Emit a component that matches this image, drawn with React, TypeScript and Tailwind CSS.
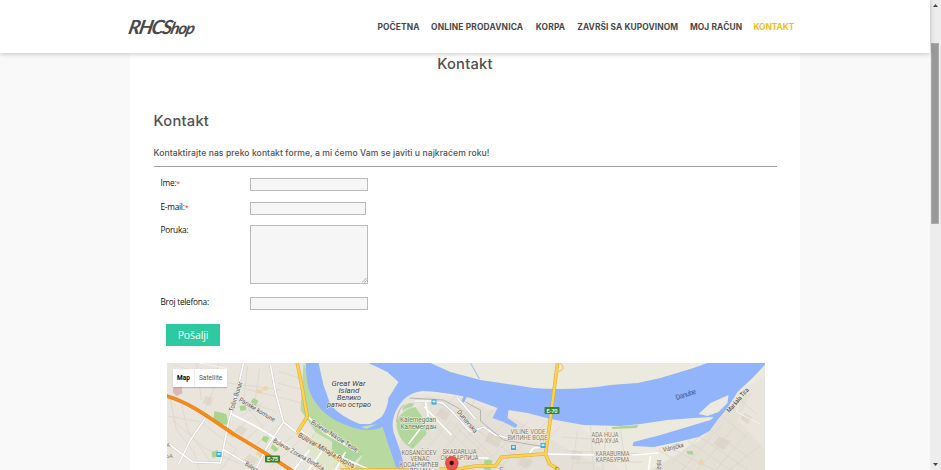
import React from "react";

const nav = [
  { label: "POČETNA", width: "w-[42px]", spacing: "tracking-[0.09px]" },
  { label: "ONLINE PRODAVNICA", width: "w-[93px]", spacing: "tracking-[0.17px]" },
  { label: "KORPA", width: "w-[30px]", spacing: "tracking-[0.2px]" },
  { label: "ZAVRŠI SA KUPOVINOM", width: "w-[101px]", spacing: "tracking-[0.08px]" },
  { label: "MOJ RAČUN", width: "w-[52px]", spacing: "tracking-[0.12px]" },
  { label: "KONTAKT", width: "w-[41px]", spacing: "tracking-[-0.08px]", active: true },
];

type LabelProps = {
  x: number;
  y: number;
  w: number;
  children: string;
  rotate?: number;
  size?: number;
  fill?: string;
  weight?: number;
  italic?: boolean;
};

function Label({ x, y, w, children, rotate = 0, size = 7, fill = "#555", weight = 400, italic = false }: LabelProps) {
  return (
    <text
      transform={`translate(${x} ${y}) rotate(${rotate})`}
      textLength={w}
      lengthAdjust="spacingAndGlyphs"
      fontSize={size}
      fill={fill}
      fontWeight={weight}
      fontStyle={italic ? "italic" : "normal"}
      stroke="#f2efe6"
      strokeWidth="1.2"
      strokeLinejoin="round"
      paintOrder="stroke"
    >
      {children}
    </text>
  );
}

function Transit({ x, y }: { x: number; y: number }) {
  return (
    <g transform={`translate(${x} ${y})`}>
      <rect width="5" height="5" rx="0.6" fill="#2aa5ea" />
      <path d="M1.2 1.2h2.6v1.5H1.2zM1.3 3.7h.7M3 3.7h.7" fill="#e8f6ff" stroke="#e8f6ff" strokeWidth=".4" />
    </g>
  );
}

function Shield({ x, y, label }: { x: number; y: number; label: string }) {
  return (
    <g transform={`translate(${x} ${y})`}>
      <rect width="15" height="7" rx="0.7" fill="#39832d" />
      <text x="2" y="5.6" fontSize="5.7" fontWeight="700" fill="#e8f3e2" textLength="11">{label}</text>
    </g>
  );
}

function CityMap() {
  return (
    <svg viewBox="166.5 363 598.5 107" className="block h-[107px] w-[598.5px] font-['Roboto','Noto_Sans',sans-serif]">
      <rect x="166" y="362" width="600" height="109" fill="#e9e5dc" />
      <path d="M368 362H765V375L735 395L720 421L700 440L765 470H620L580 425L530 413L465 397L400 392Z" fill="#ece9df" />
      <path d="M390 470L400 440L425 396L500 411L605 470Z" fill="#e4e0d7" />
      <path d="M700 440L735 400L752 392L737 420L765 450V470H650Z" fill="#e4e0d6" />

      <g stroke="#d9d5cc" strokeWidth=".8" fill="none">
        <path d="M167 416L200 422L236 449L220 470M170 400L176 430L193 451L199 470M181 404L187 430L211 463M174 365L228 383L280 390M218 363L213 390L203 413M196 363L201 400M247 366L243 402L263 428M259 369L254 404M238 387L274 396L305 404M277 371L302 379M277 383L303 390M242 400L276 412M240 416L262 403M231 435L251 417M240 444L264 424M249 450L279 425M257 465L292 436M270 467L300 440M172 420L204 448L240 464" />
        <path d="M402 437L435 470M409 449L432 424L470 462M417 460L450 421L489 459M428 470L462 427L506 470M430 412L488 470M433 400L527 465M437 415L457 394M451 432L475 400M461 443L492 411M472 454L509 419M486 462L528 421M497 470L548 420M520 470L560 426" />
        <path d="M658 450L692 470M672 449L714 470M687 441L730 470M698 436L748 470M707 428L750 459M723 417L747 438M731 407L748 423M739 399L756 414M670 465L699 436M682 470L721 425M697 470L734 427M715 470L747 433M729 470L760 445M561 437L618 441M565 451L650 454M573 463L642 462M577 431L571 470M590 427L593 470M606 428L602 470M620 430L626 470" />
      </g>
      <g fill="#d5cec0" opacity=".5">
        <path d="M176 374l10 3-3 8-11-3zM205 396l8 2-3 8-8-3zM239 425l8 4-5 7-8-5zM248 454l10 5-6 8-9-6zM406 404l9 5-5 7-8-4zM440 408l10 5-5 8-10-6zM464 411l8 6-6 7-8-5zM488 433l14 6-5 9-13-7zM522 456l11 5-7 8-9-5zM572 450l10 2-3 9-9-3zM718 437l12 4-7 9-10-6zM744 413l8 4-5 7-7-5z" />
      </g>
      <path d="M164 362L195 362L229 369M690 386L728 403M747 371L736 412L760 424" fill="none" stroke="#f3f1ea" strokeWidth="1" />

      <path d="M303 363L315 389L326 411L345 424L382 427L398 470H330L308 442L315 432L300 410Z" fill="#b8d9a0" />
      <path d="M315 432L337 445L362 455L353 470H325L305 450Z" fill="#dfe6cc" />
      <path d="M332 440L363 453L352 464L331 453Z" fill="#add49a" />
      <path d="M214 411L226 414L228 425L219 424L213 418ZM239 406L245 405L246 410L240 411ZM253 398L258 401L255 406L250 402ZM263 436L269 437L266 443L261 440ZM272 444L278 449L275 452L270 448ZM211 452L217 450L219 456L212 458ZM484 460L492 460L490 470L483 469ZM611 427L638 425L636 428L612 429ZM686 451L692 451L693 455L687 454Z" fill="#a9d58e" />
      <path d="M228 428l8 5-3 5-8-4zM259 448l7 5-4 6-7-5zM697 462l5-3 1 5-5 1zM256 389l6 1-1 4-5-1zM264 386l4 1-2 4-4-1z" fill="#ecd5a8" />
      <path d="M173 388l8-1 1 6-6 3-4-4z" fill="#dcb8b4" />

      <path
        d="M305 363C306 374 306 382 309 391C314 405 327 418 341 423C354 429 369 433 382 427L387 442L397 471H405L400 452L393 432Q390 420 397 408Q405 393 422 391Q445 392 470 398L497 408L492 418L503 422L515 428L517 425L507 418L508 410L527 413L550 419L583 425L620 426L640 424L667 420L693 418L713 417L710 420L690 426L660 435L633 442L632 446L653 447L677 442L698 437L709 431L717 420L727 408L737 392L753 377L766 363H707L693 368L660 378L637 383L610 385Q574 391 533 388L507 384L480 380L450 372L430 363Z"
        fill="#91b4fb"
      />
      <path d="M318 363L323 385L330 405Q341 417 359 424L370 424L381 417Q387 409 388 398L398 382L387 372L368 363Z" fill="#ebe8df" />
      <path d="M698 414L710 403L728 395L727 403L718 412L707 416Z" fill="#ece9df" />
      <path d="M470 363L479 379" stroke="#a8c6fa" strokeWidth="1.2" />
      <path d="M360 427L377 424L366 429Z" fill="#c5ddb0" />
      <path d="M462 402L465 396" stroke="#91b4fb" strokeWidth="3" />
      <path d="M415 407Q397 412 396 424Q396 435 405 444L412 449L426 434L425 422Z" fill="#b1d79b" />
      <path d="M402 408Q409 401 414 404L411 407Q403 408 402 411" fill="#b1d79b" />

      <g fill="none" stroke="#cbc8c0" strokeWidth="2.5" strokeLinejoin="round">
        <path d="M270 365L275 392L283 422L297 433M283 422L266 448L255 470M243 363L238 385L228 422L223 448L220 463L192 462L167 443M205 418L190 440L178 464M222 449L257 470" />
        <path d="M414 401L431 401L442 403L451 411L470 432L483 427L495 435L508 438M457 398L475 419" />
      </g>
      <g fill="none" stroke="#fff" strokeWidth="1.6" strokeLinejoin="round">
        <path d="M270 365L275 392L283 422L297 433M283 422L266 448L255 470M243 363L238 385L228 422L223 448L220 463L192 462L167 443M205 418L190 440L178 464M222 449L257 470M231 414L251 424L270 435L312 463M308 417L323 432L357 452M300 431L327 451L370 470M309 450L293 470M324 448L308 470M345 452L335 470" />
        <path d="M408 444L428 418L425 402M412 449L428 464M414 401L431 401L442 403L451 411L470 432L483 427L495 435L508 438M457 398L475 419M424 407L451 435M460 458L488 458M545 454L593 455M632 455L658 453M650 456L648 470M529 453L533 448L543 447" />
      </g>
      <path d="M404 405Q398 407 396 422M465 402L480 410L480 421L503 440L545 447M409 398L443 400L463 411" fill="none" stroke="#aaa9a7" strokeWidth=".8" />

      <g fill="none" strokeLinejoin="round">
        <path d="M296.7 363L301.7 388L306.7 416.7L296.7 432.7M297 432L320 447L351 468M340 470H410M439 469H460M453 470L475 466L495 466L501 457L544 454M557 363L550 418L545 454L549 464L559 470" stroke="#dfac35" strokeWidth="3.5" />
        <path d="M296.7 363L301.7 388L306.7 416.7L296.7 432.7M297 432L320 447L351 468M340 470H410M439 469H460M453 470L475 466L495 466L501 457L544 454M557 363L550 418L545 454L549 464L559 470" stroke="#fcd34f" strokeWidth="2.3" />
        <path d="M166 396C190 403 208 417 233 434L263 452L292 471" stroke="#d9822c" strokeWidth="3.6" />
        <path d="M166 396C190 403 208 417 233 434L263 452L292 471" stroke="#f68b15" strokeWidth="2.8" />
        <path d="M559 363Q565 367 561 370L556 373" stroke="#f4cc79" strokeWidth="1.5" />
      </g>

      <Label x={331} y={385.5} w={34} size={7.4} italic fill="#404040">Great War</Label>
      <Label x={338} y={393} w={21} size={7.4} italic fill="#404040">Island</Label>
      <Label x={336.5} y={400.2} w={24} size={7.4} italic fill="#404040">Велико</Label>
      <Label x={326.5} y={407.4} w={44} size={7.2} italic fill="#404040">ратно острво</Label>
      <Label x={399.5} y={422} w={36} size={7} fill="#53804d">Kalemegdan</Label>
      <Label x={400} y={429} w={36} size={7} fill="#53804d">Калемегдан</Label>
      <Label x={401} y={455} w={35} size={6.6} fill="#777064">KOSANČIĆEV</Label>
      <Label x={410} y={461} w={19} size={6.6} fill="#777064">VENAC</Label>
      <Label x={399} y={467} w={39} size={6.6} fill="#777064">КОСАНЧИЋЕВ</Label>
      <Label x={409} y={473} w={21} size={6.6} fill="#777064">ВЕНАЦ</Label>
      <Label x={442} y={454} w={34} size={6.6} fill="#777064">SKADARLIJA</Label>
      <Label x={440} y={460} w={38} size={6.6} fill="#777064">СКАДАРЛИЈА</Label>
      <Label x={510} y={434} w={35} size={6.6} fill="#8b7b67">VILINE VODE</Label>
      <Label x={507} y={440} w={40} size={6.6} fill="#8b7b67">ВИЛИНЕ ВОДЕ</Label>
      <Label x={591} y={437} w={27} size={6.6} fill="#8b7b67">ADA HUJA</Label>
      <Label x={591} y={443} w={27} size={6.6} fill="#8b7b67">АДА ХУЈА</Label>
      <Label x={595} y={456} w={34} size={6.6} fill="#8b7b67">KARABURMA</Label>
      <Label x={595} y={462} w={34} size={6.6} fill="#8b7b67">КАРАБУРМА</Label>
      <Label x={232.5} y={412} w={31} rotate={-72} size={6.6}>Tošin Bunar</Label>
      <Label x={238} y={401} w={41} rotate={31} size={6.6}>Pariske komune</Label>
      <Label x={272} y={442} w={58} rotate={30} size={6.6}>Bulevar Zorana Đinđića</Label>
      <Label x={310} y={423.5} w={54} rotate={32} size={6.6}>Bulevar Nikole Tesle</Label>
      <Label x={297} y={436.5} w={64} rotate={30} size={7} fill="#6e481b">Bulevar Mihajla Pupina</Label>
      <Label x={244} y={465} w={33} rotate={32} size={6.6}>Bulevar Arsenija</Label>
      <Label x={456} y={412} w={28} rotate={50} size={6.6}>Dunavska</Label>
      <Label x={729} y={413} w={30} rotate={-49} size={6.6} fill="#333">Maršala Tita</Label>
      <Label x={663} y={452} w={21} rotate={-14} size={6.6}>Višnjička</Label>
      <Label x={660} y={475} w={15} rotate={-90} size={6.3}>Mirijevska</Label>
      <text transform="translate(676 400) rotate(-18)" textLength="21" fontSize="7.2" fill="#435c96">Danube</text>
      <text x="162" y="447" fontSize="6" fill="#8b7b67">RA</text>
      <text x="162" y="458" fontSize="6" fill="#8b7b67">ЊА</text>
      <text x="499" y="471" fontSize="6" fill="#555">C</text>
      <text transform="translate(556 472) rotate(-32)" fontSize="6" fill="#555">C</text>
      <Transit x={216} y={452} />
      <Transit x={431} y={399.5} />
      <Transit x={510.5} y={445} />
      <Transit x={540} y={443} />
      <Shield x={264.5} y={455.5} label="E-75" />
      <Shield x={544} y={407} label="E-70" />
      <path d="M451.2 478C450.5 471 445 468 445 462.8A6.3 6.3 0 0 1 457.6 462.8C457.6 468 452 471 451.2 478Z" fill="#ec5349" stroke="#c33a32" strokeWidth=".7" />
      <circle cx="451.2" cy="463" r="2.2" fill="#3b110e" />
    </svg>
  );
}

function Field({ label, required, children }: { label: string; required?: boolean; children: React.ReactNode }) {
  return (
    <div className="flex items-start">
      <label className="-mt-px w-[89.5px] shrink-0 font-['Open_Sans','Noto_Sans',sans-serif] text-[8.3px] leading-[11px] tracking-[-0.26px] whitespace-nowrap text-[#111]">
        {label}{required && <span className="text-[7px] text-[#f33]">*</span>}
      </label>
      {children}
    </div>
  );
}

export default function App() {
  return (
    <div className="flex h-[470px] w-[941px] overflow-hidden bg-[#f9f9f9] font-['Inter','Open_Sans',sans-serif] text-[#505050]">
      <div className="flex h-[470px] w-[930px] shrink-0 flex-col">
        <header className="z-10 flex h-[53px] shrink-0 items-center bg-white pl-[128.5px] shadow-[0_1px_5px_rgba(0,0,0,0.22)]">
          <div className="h-[28px] w-[249px] shrink-0 whitespace-nowrap">
            <div className="inline-flex origin-left -skew-x-12 items-baseline font-['Lato',cursive] leading-[27px] font-bold text-[#4a4a4a] italic">
              <span className="text-[19.5px] tracking-[-1.4px]">RHCS</span>
              <span className="text-[16.5px] tracking-[-1.2px]">hop</span>
            </div>
          </div>
          <nav className="flex gap-[11.6px] pt-px text-[8.4px] leading-[10px] font-bold whitespace-nowrap">
            {nav.map((item) => (
              <a key={item.label} className={`${item.width} ${item.spacing} ${item.active ? "text-[#f2be16]" : "text-[#484848]"}`}>{item.label}</a>
            ))}
          </nav>
        </header>
        <main className="ml-[130px] flex h-[417px] w-[670px] flex-col bg-white">
          <h1 className="mt-[1px] h-[20px] text-center text-[14.7px] leading-[20px] font-medium tracking-[0.25px]">Kontakt</h1>
          <section className="mt-[37px] ml-[23.5px] w-[623px]">
            <h2 className="h-[20px] text-[14.7px] leading-[20px] font-medium tracking-[0.25px]">Kontakt</h2>
            <p className="mt-[17px] h-[11px] text-[8.6px] leading-[11px] font-medium tracking-[0.07px] whitespace-nowrap">Kontaktirajte nas preko kontakt forme, a mi ćemo Vam se javiti u najkraćem roku!</p>
            <div className="mt-[7px] h-px bg-[#a2a2a2]" />
            <form className="pl-[7px]">
              <div className="mt-[11px] h-[23.5px]">
                <Field label="Ime:" required><div className="h-[13px] w-[118px] border border-[#bbb] bg-[#f6f6f6]" /></Field>
              </div>
              <div className="h-[23.5px]">
                <Field label="E-mail:" required><div className="h-[13px] w-[116px] border border-[#bbb] bg-[#f6f6f6]" /></Field>
              </div>
              <div className="h-[72px]">
                <Field label="Poruka:">
                  <div className="flex h-[59px] w-[118px] items-end justify-end border border-[#bbb] bg-[#f6f6f6]">
                    <svg className="h-[6px] w-[6px]" viewBox="0 0 6 6"><path d="M1 5.5L5.5 1M3.5 5.5L5.5 3.5" stroke="#888" strokeWidth=".7" /></svg>
                  </div>
                </Field>
              </div>
              <div className="h-[27px]">
                <Field label="Broj telefona:"><div className="h-[13px] w-[118px] border border-[#bbb] bg-[#f6f6f6]" /></Field>
              </div>
              <button type="button" className="ml-[5.5px] flex h-[22px] w-[54px] items-center justify-center bg-[#2dcaa0] font-['Open_Sans','Noto_Sans',sans-serif] text-[10.5px] leading-[15px] tracking-[-0.1px] text-white">Pošalji</button>
            </form>
          </section>
          <div className="mt-auto ml-[36.5px] grid h-[107px] w-[598.5px] shrink-0">
            <div className="col-start-1 row-start-1"><CityMap /></div>
            <div className="z-10 col-start-1 row-start-1 mt-[6px] ml-[6px] flex h-[18px] w-[54.5px] items-center bg-white font-['Roboto',sans-serif] text-[6.5px] leading-[18px] shadow-[0_1px_1px_rgba(0,0,0,0.2)]">
              <span className="w-[22px] border-r border-[#eee] pl-[4.5px] font-bold text-black">Map</span>
              <span className="pl-[4.5px] text-[#555]">Satellite</span>
            </div>
          </div>
        </main>
      </div>
      <aside className="flex h-[470px] w-[11px] shrink-0 flex-col items-start bg-[#ededed] pl-px">
        <svg className="mt-[4px] ml-[1.5px] h-[3px] w-[5px]" viewBox="0 0 5 3"><path d="M0 3L2.5 0L5 3Z" fill="#444" /></svg>
        <div className="mt-[36px] h-[181px] w-[8px] border border-[#aaa] bg-[#999]" />
        <svg className="mt-auto mb-[4px] ml-[1.5px] h-[3px] w-[5px]" viewBox="0 0 5 3"><path d="M0 0H5L2.5 3Z" fill="#444" /></svg>
      </aside>
    </div>
  );
}
